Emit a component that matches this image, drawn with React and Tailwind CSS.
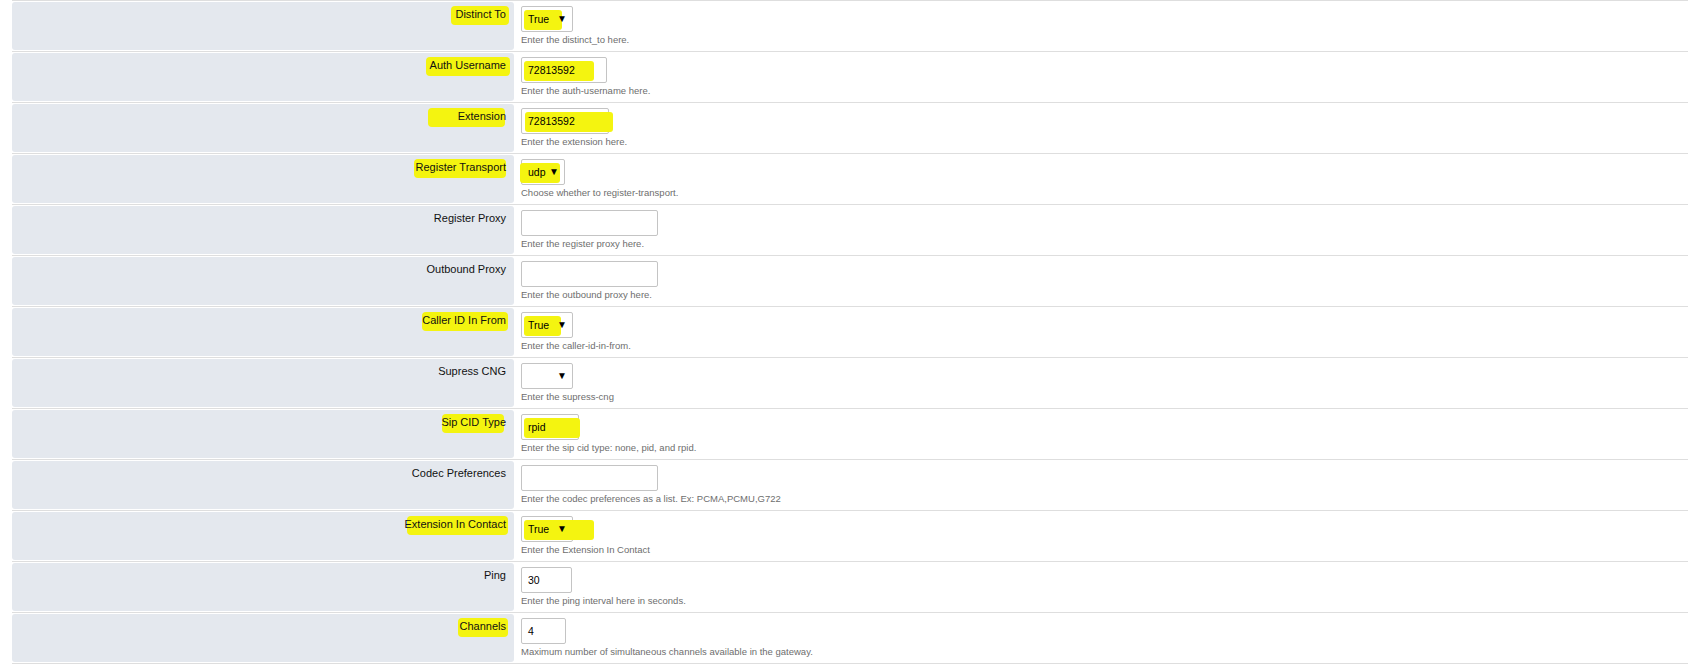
import React from "react";

const rows = [
  { label: "Distinct To", kind: "select", value: "True", w: "w-[52px]", hint: "Enter the distinct_to here.", lhl: "w-[58px] right-[5px]", vhl: "left-[2px] w-[38px]" },
  { label: "Auth Username", kind: "input", value: "72813592", w: "w-[86px]", hint: "Enter the auth-username here.", lhl: "w-[84px] right-[4px]", vhl: "left-[2px] w-[70px]" },
  { label: "Extension", kind: "input", value: "72813592", w: "w-[88px]", hint: "Enter the extension here.", lhl: "w-[77px] right-[9px]", vhl: "left-[3px] w-[88px]" },
  { label: "Register Transport", kind: "select", value: "udp", w: "w-[44px]", hint: "Choose whether to register-transport.", lhl: "w-[92px] right-[8px]", vhl: "left-[-2px] w-[40px]" },
  { label: "Register Proxy", kind: "input", value: "", w: "w-[137px]", hint: "Enter the register proxy here." },
  { label: "Outbound Proxy", kind: "input", value: "", w: "w-[137px]", hint: "Enter the outbound proxy here." },
  { label: "Caller ID In From", kind: "select", value: "True", w: "w-[52px]", hint: "Enter the caller-id-in-from.", lhl: "w-[86px] right-[6px]", vhl: "left-[2px] w-[37px]" },
  { label: "Supress CNG", kind: "select", value: "", w: "w-[52px]", hint: "Enter the supress-cng" },
  { label: "Sip CID Type", kind: "input", value: "rpid", w: "w-[58px]", hint: "Enter the sip cid type: none, pid, and rpid.", lhl: "w-[62px] right-[10px]", vhl: "left-[2px] w-[56px]" },
  { label: "Codec Preferences", kind: "input", value: "", w: "w-[137px]", hint: "Enter the codec preferences as a list. Ex: PCMA,PCMU,G722" },
  { label: "Extension In Contact", kind: "select", value: "True", w: "w-[52px]", hint: "Enter the Extension In Contact", lhl: "w-[101px] right-[6px]", vhl: "left-[2px] w-[70px]" },
  { label: "Ping", kind: "input", value: "30", w: "w-[51px]", hint: "Enter the ping interval here in seconds." },
  { label: "Channels", kind: "input", value: "4", w: "w-[45px]", hint: "Maximum number of simultaneous channels available in the gateway.", lhl: "w-[50px] right-[6px]" },
];

function Field({ row }) {
  return (
    <div className={`relative h-[26px] ${row.w} border border-[#c4c4c4] rounded-[2px] bg-white flex items-center`}>
      {row.vhl && (
        <span className={`absolute top-[3px] h-[20px] bg-[#f4f410] rounded-[3px] ${row.vhl}`} />
      )}
      <span className="relative pl-[6px] text-[10.5px] text-black leading-none flex-1">{row.value}</span>
      {row.kind === "select" && (
        <span className="relative pr-[5px] text-[10px] text-black leading-none">▼</span>
      )}
    </div>
  );
}

function Row({ row }) {
  return (
    <div className="flex h-[51px] border-t border-[#dedede]">
      <div className="relative w-[502px] mt-[1px] mb-[1px] bg-[#e4e8ee] rounded-[3px] flex justify-end pr-[8px] pt-[5px]">
        {row.lhl && (
          <span className={`absolute top-[4px] h-[19px] bg-[#f4f410] rounded-[4px] ${row.lhl}`} />
        )}
        <span className="relative text-[11px] text-[#111] leading-[14px]">{row.label}</span>
      </div>
      <div className="flex-1 pl-[7px] pt-[5px] bg-white">
        <Field row={row} />
        <div className="mt-[2px] text-[9.5px] text-[#6e6e6e] leading-[12px]">{row.hint}</div>
      </div>
    </div>
  );
}

export default function App() {
  return (
    <div className="w-[1704px] h-[666px] bg-white overflow-hidden" style={{ fontFamily: '"Liberation Sans", Arial, sans-serif' }}>
      <div className="ml-[12px] w-[1676px] border-b border-[#dedede]">
        {rows.map((r) => (
          <Row key={r.label} row={r} />
        ))}
      </div>
    </div>
  );
}
